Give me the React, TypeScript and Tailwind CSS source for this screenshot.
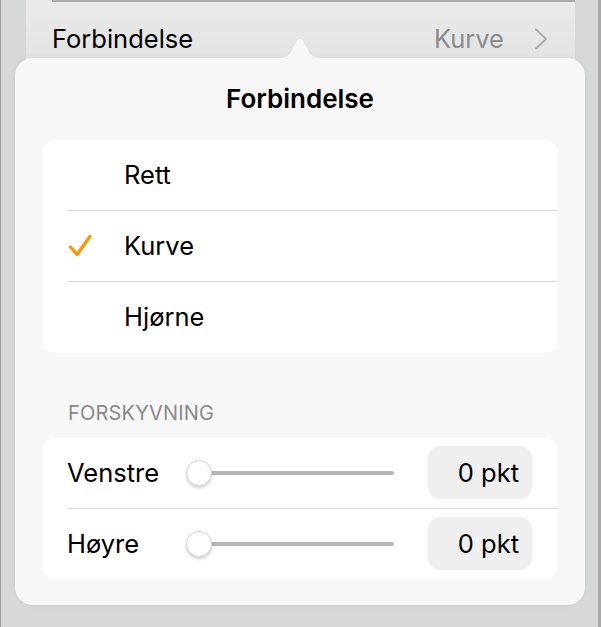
import React from "react";

const font = { fontFamily: "Inter, 'Noto Sans', sans-serif" };

function Check() {
  return (
    <svg width="26" height="26" viewBox="0 0 26 26" fill="none">
      <path d="M3.5 14 L10 21.5 L23 3.5" stroke="#ff9500" strokeWidth="3.2" strokeLinecap="round" strokeLinejoin="round" />
    </svg>
  );
}

function Slider() {
  return (
    <div className="relative flex items-center w-[208px] h-[26px]">
      <div className="ml-[12px] flex-1 h-[4px] rounded-full bg-[#b6b6b6]" />
      <div className="absolute left-0 top-0 w-[26px] h-[26px] rounded-full bg-white border border-[#d4d4d4] shadow-[0_2px_3px_rgba(0,0,0,0.18)]" />
    </div>
  );
}

function OptionRow({ label, checked, last }: { label: string; checked?: boolean; last?: boolean }) {
  return (
    <div className="flex h-[71px] pl-[25px]">
      <div className={`flex flex-1 items-center ${last ? "" : "border-b border-[#d9d9d9]"}`}>
        <div className="w-[57px] flex items-center">{checked ? <Check /> : null}</div>
        <span className="text-[25.5px] text-black">{label}</span>
      </div>
    </div>
  );
}

function SliderRow({ label, last }: { label: string; last?: boolean }) {
  return (
    <div className="flex h-[70.5px] pl-[25px]">
      <div className={`flex flex-1 items-center ${last ? "" : "border-b border-[#d9d9d9]"}`}>
        <span className="w-[119px] text-[25.5px] text-black">{label}</span>
        <Slider />
        <div className="ml-[34px] w-[104px] h-[53px] rounded-[12px] bg-[#efeff0] flex items-center justify-end pr-[13px] text-[25.5px] text-black">
          0 pkt
        </div>
      </div>
    </div>
  );
}

export default function App() {
  return (
    <div className="relative w-[601px] h-[627px] overflow-hidden bg-[#d6d8d8]" style={font}>
      {/* background page */}
      <div className="flex h-full">
        <div className="w-[1px] bg-[#9c9e9e]" />
        <div className="w-[25px]" />
        <div className="w-[549px] h-[60px] flex flex-col bg-gradient-to-b from-[#eaeaea] to-[#e2e3e3]">
          <div className="ml-[26px] h-[2px] bg-[#ababab]" />
          <div className="flex items-center h-[58px] pt-[16px] pl-[26px] pr-[27px]">
            <span className="text-[25.5px] text-black">Forbindelse</span>
            <span className="ml-auto text-[25.5px] text-[#8b8b8b]">Kurve</span>
            <svg className="ml-[30px]" width="14" height="22" viewBox="0 0 14 22" fill="none">
              <path d="M2 1.5 L12 11 L2 20.5" stroke="#acacac" strokeWidth="2" strokeLinecap="round" strokeLinejoin="round" />
            </svg>
          </div>
        </div>
        <div className="flex-1" />
        <div className="w-[3px] bg-[#a8aaaa]" />
      </div>

      {/* popover */}
      <div className="absolute left-[15px] top-[58px] w-[570px] h-[547px] rounded-[18px] bg-[#f7f7f7] shadow-[0_0_6px_rgba(0,0,0,0.05)]">
        <svg className="absolute left-[258px] top-[-20px]" width="54" height="21" viewBox="0 0 54 21">
          <path d="M0 21 C10 21 14 19.5 18 14 L24 3 C25.5 0.3 28.5 0.3 30 3 L36 14 C40 19.5 44 21 54 21 Z" fill="#f7f7f7" />
        </svg>
        <div className="flex flex-col px-[27px]">
          <div className="h-[82px] flex items-center justify-center pb-[2px]">
            <span className="text-[26px] font-semibold text-black">Forbindelse</span>
          </div>
          <div className="rounded-[13px] bg-white overflow-hidden">
            <OptionRow label="Rett" />
            <OptionRow label="Kurve" checked />
            <OptionRow label="Hjørne" last />
          </div>
          <div className="h-[85px] flex items-end pb-[10px] pl-[26px]">
            <span className="text-[20px] tracking-[0.01em] text-[#8a8a8a]">FORSKYVNING</span>
          </div>
          <div className="rounded-[13px] bg-white overflow-hidden">
            <SliderRow label="Venstre" />
            <SliderRow label="Høyre" last />
          </div>
        </div>
      </div>
    </div>
  );
}
